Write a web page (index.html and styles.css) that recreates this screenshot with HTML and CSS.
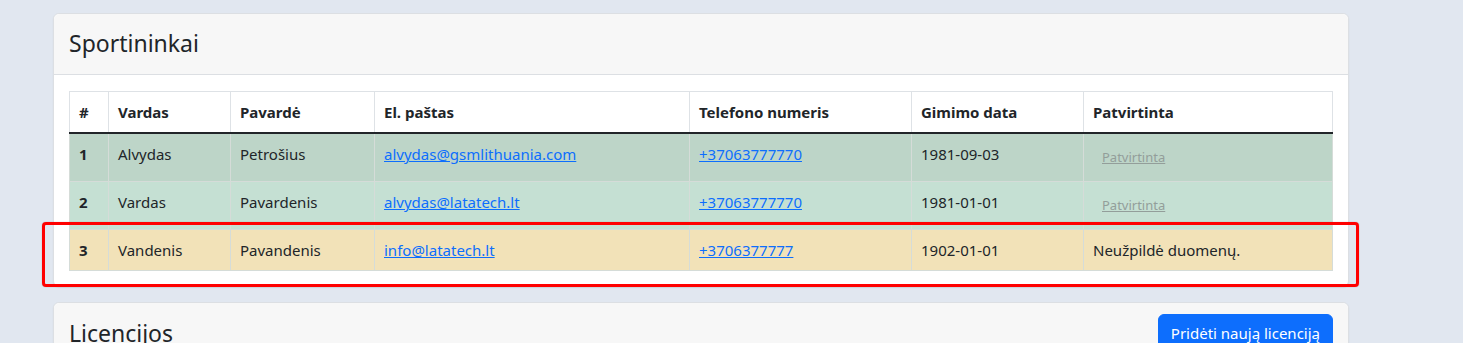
FILE: index.html
```html
<!DOCTYPE html>
<html lang="lt">
<head>
    <meta charset="UTF-8">
    <title>Sportininkai</title>
    <link rel="stylesheet" href="styles.css">
</head>
<body>
    <div class="page">
        <div class="card card-athletes">
            <div class="card-header">
                <h4>Sportininkai</h4>
            </div>
            <div class="card-body">
                <table class="table">
                    <colgroup>
                        <col class="c-num">
                        <col class="c-name">
                        <col class="c-surname">
                        <col class="c-email">
                        <col class="c-phone">
                        <col class="c-birth">
                        <col class="c-state">
                    </colgroup>
                    <thead>
                        <tr>
                            <th>#</th>
                            <th>Vardas</th>
                            <th>Pavardė</th>
                            <th>El. paštas</th>
                            <th>Telefono numeris</th>
                            <th>Gimimo data</th>
                            <th>Patvirtinta</th>
                        </tr>
                    </thead>
                    <tbody>
                        <tr class="row-ok-dark">
                            <th>1</th>
                            <td>Alvydas</td>
                            <td>Petrošius</td>
                            <td><a href="#">alvydas@gsmlithuania.com</a></td>
                            <td><a href="#">+37063777770</a></td>
                            <td>1981-09-03</td>
                            <td><a class="btn-link-sm" href="#">Patvirtinta</a></td>
                        </tr>
                        <tr class="row-ok">
                            <th>2</th>
                            <td>Vardas</td>
                            <td>Pavardenis</td>
                            <td><a href="#">alvydas@latatech.lt</a></td>
                            <td><a href="#">+37063777770</a></td>
                            <td>1981-01-01</td>
                            <td><a class="btn-link-sm" href="#">Patvirtinta</a></td>
                        </tr>
                        <tr class="row-warn">
                            <th>3</th>
                            <td>Vandenis</td>
                            <td>Pavandenis</td>
                            <td><a href="#">info@latatech.lt</a></td>
                            <td><a href="#">+3706377777</a></td>
                            <td>1902-01-01</td>
                            <td>Neužpildė duomenų.</td>
                        </tr>
                    </tbody>
                </table>
            </div>
            <div class="highlight"></div>
        </div>

        <div class="card">
            <div class="card-header header-split">
                <h4>Licencijos</h4>
                <a class="btn-primary" href="#">Pridėti naują licenciją</a>
            </div>
            <div class="card-body"></div>
        </div>
    </div>
</body>
</html>
```

FILE: styles.css
```css
body {
    margin: 0;
    background-color: #e1e7f0;
    font-family: "Noto Sans", "Open Sans", sans-serif;
    font-size: 15px;
    line-height: 24px;
    color: #212529;
}
.page {
    padding: 13px 0 0 53px;
    width: 1296px;
}
.card {
    background-color: #fff;
    border: 1px solid #dcdfe3;
    border-radius: 6px;
    margin-bottom: 15px;
    box-shadow: 0 1px 2px rgba(0, 0, 0, .06);
}
.card-athletes { position: relative; }
.card-header {
    background-color: #f7f7f7;
    border-bottom: 1px solid #dcdfe3;
    border-radius: 6px 6px 0 0;
    padding: 15px 15px 16px 15px;
}
.card-header h4 {
    margin: 0;
    font-size: 23px;
    line-height: 29px;
    font-weight: 400;
}
.header-split {
    display: flex;
    justify-content: space-between;
    align-items: center;
    padding: 11px 15px 12px 15px;
}
.card-body { padding: 16px 15px 15px 15px; }

.table {
    width: 100%;
    table-layout: fixed;
    border-collapse: collapse;
}
.c-num { width: 39px; }
.c-name { width: 122px; }
.c-surname { width: 144px; }
.c-email { width: 315px; }
.c-phone { width: 222px; }
.c-birth { width: 172px; }
.table th, .table td {
    border: 1px solid #dee2e6;
    padding: 8px 9px;
    text-align: left;
    vertical-align: top;
}
.table th { font-weight: 700; }
.table thead th {
    border-bottom: 2px solid #212529;
    background-color: #fff;
}
.table tbody th, .table tbody td { border-color: #d5dcd8; }
.table a { color: #0d6efd; }
.row-ok-dark { background-color: #bdd5c8; }
.row-ok { background-color: #c5e0d3; }
.row-warn { background-color: #f2e2b8; }
.row-warn th, .row-warn td { border-color: #e2e4e3; }

.btn-link-sm {
    display: inline-block;
    padding: 4px 8px;
    font-size: 13px;
    line-height: 21px;
    border: 1px solid transparent;
}
.table .btn-link-sm { color: #939e9a; }

.btn-primary {
    display: inline-block;
    background-color: #0d6efd;
    color: #fff;
    text-decoration: none;
    padding: 6px 12px;
    border-radius: 6px;
    line-height: 24px;
    border: 1px solid #0d6efd;
}

.highlight {
    position: absolute;
    left: -12px;
    top: 208px;
    width: 1311px;
    height: 59px;
    border: 3px solid #f00;
    border-radius: 4px;
    box-shadow: 0 0 1px rgba(0, 0, 0, .4);
}
```
